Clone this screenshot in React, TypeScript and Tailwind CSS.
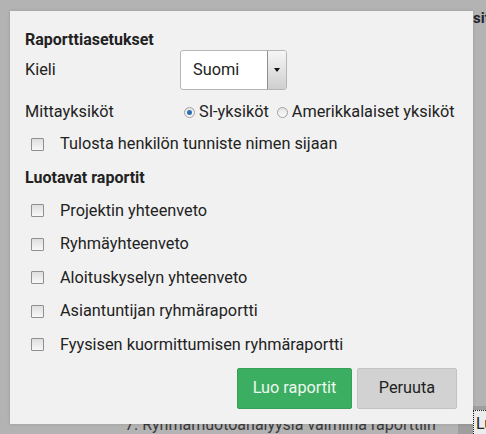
import React from "react";

const reports = [
  "Projektin yhteenveto",
  "Ryhmäyhteenveto",
  "Aloituskyselyn yhteenveto",
  "Asiantuntijan ryhmäraportti",
  "Fyysisen kuormittumisen ryhmäraportti",
];

function Checkbox() {
  return (
    <span className="inline-block w-[13px] h-[13px] border border-[#8f8f8f] bg-gradient-to-b from-[#dedede] to-[#f8f8f8] rounded-[1px]" />
  );
}

function Radio({ checked }: { checked?: boolean }) {
  return (
    <span className="inline-flex items-center justify-center w-[11px] h-[11px] rounded-full border border-[#a0a0a0] bg-gradient-to-b from-[#e4e4e4] to-[#fbfbfb]">
      {checked && <span className="w-[5px] h-[5px] rounded-full bg-[#2f6fb3]" />}
    </span>
  );
}

export default function App() {
  return (
    <div
      className="relative w-[486px] h-[434px] overflow-hidden bg-[#b3b3b3]"
      style={{ fontFamily: "Roboto, 'Liberation Sans', sans-serif" }}
    >
      {/* page behind the overlay */}
      <span className="absolute left-[473px] top-[7px] text-[15px] font-bold text-[#1e2430]">sit</span>
      <span className="absolute left-[125px] top-[413px] text-[16px] text-[#3a3a3a]">
        7. Ryhmämuotoanalyysia valmiina raporttiin
      </span>
      <div className="absolute left-[458px] top-[406px] w-[30px] h-[30px] bg-[#9e9e9e]">
        <div className="ml-[15px] mt-[4px] h-full border-l border-t border-dotted border-[#222] bg-[#ececec] pl-[2px] text-[16px] leading-[26px] text-[#222]">
          Lu
        </div>
      </div>

      {/* dialog */}
      <div className="absolute left-[10px] top-[11px] w-[463px] h-[413px] bg-[#f1f1f1] shadow-[0_0_3px_rgba(0,0,0,0.15)] px-[15px] pt-[18px] text-[16.3px] text-[#222]">
        <div className="h-[21px] flex items-center text-[16px] font-bold text-[#222]">Raporttiasetukset</div>

        <div className="h-[40px] flex items-center">
          <span className="w-[155px]">Kieli</span>
          <div className="flex h-[40px] w-[107px] rounded-[3px] border border-[#b5b5b5] bg-white overflow-hidden">
            <span className="flex-1 flex items-center pl-[12px]">Suomi</span>
            <span className="w-[19px] flex items-center justify-center border-l border-[#8e8e8e] bg-gradient-to-b from-[#f6f6f6] to-[#cfcfcf]">
              <span className="w-0 h-0 border-l-[3px] border-r-[3px] border-t-[4px] border-l-transparent border-r-transparent border-t-[#111]" />
            </span>
          </div>
        </div>

        <div className="h-[44px] flex items-center">
          <span className="w-[159px]">Mittayksiköt</span>
          <span className="flex items-center gap-[4px]">
            <Radio checked />
            <span>SI-yksiköt</span>
          </span>
          <span className="flex items-center gap-[4px] ml-[8px]">
            <Radio />
            <span>Amerikkalaiset yksiköt</span>
          </span>
        </div>

        <div className="h-[20px] flex items-center">
          <span className="w-[35px] pl-[6px] flex"><Checkbox /></span>
          <span>Tulosta henkilön tunniste nimen sijaan</span>
        </div>

        <div className="h-[40px] flex items-end pb-[4px] text-[16px] font-bold">Luotavat raportit</div>

        {reports.map((r) => (
          <div key={r} className="h-[33.5px] flex items-center">
            <span className="w-[35px] pl-[6px] flex"><Checkbox /></span>
            <span>{r}</span>
          </div>
        ))}

        <div className="flex justify-end gap-[5px] mt-[6px] pr-[1px]">
          <button className="h-[41px] w-[115px] rounded-[2px] bg-[#3bae61] border border-[#35a058] text-[#eef8ef] text-[16.3px]">
            Luo raportit
          </button>
          <button className="h-[41px] w-[100px] rounded-[2px] bg-[#d2d2d2] border border-[#c2c2c2] text-[#222] text-[16.3px]">
            Peruuta
          </button>
        </div>
      </div>
    </div>
  );
}
